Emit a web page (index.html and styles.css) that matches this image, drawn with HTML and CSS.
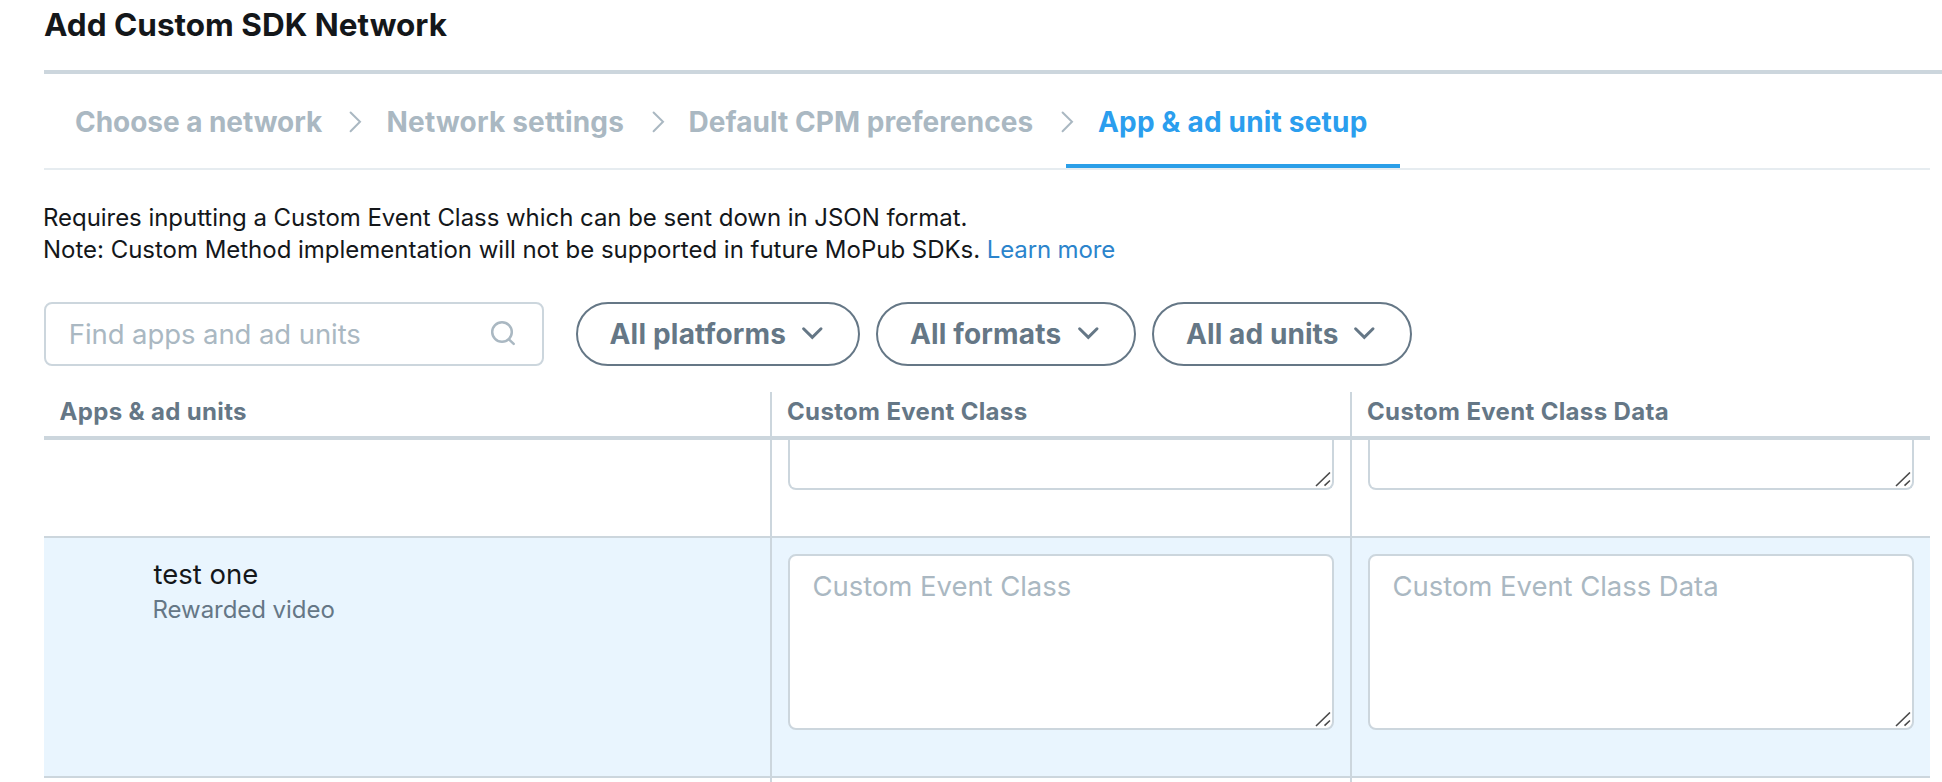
FILE: index.html
```
<!DOCTYPE html>
<html lang="en">
<head>
<meta charset="utf-8">
<title>Add Custom SDK Network</title>
<link rel="stylesheet" href="styles.css">
</head>
<body>
<header class="header"><h1 class="title">Add Custom SDK Network</h1></header>

<main class="main">
  <nav class="steps">
    <a class="step step-choose">Choose a network
      <svg class="sep" viewBox="0 0 14 22"><path d="M2.6 1.5 L12 10.8 L2.6 20.3"/></svg></a>
    <a class="step step-settings">Network settings
      <svg class="sep" viewBox="0 0 14 22"><path d="M2.6 1.5 L12 10.8 L2.6 20.3"/></svg></a>
    <a class="step step-cpm">Default CPM preferences
      <svg class="sep" viewBox="0 0 14 22"><path d="M2.6 1.5 L12 10.8 L2.6 20.3"/></svg></a>
    <a class="step step-setup active">App &amp; ad unit setup</a>
  </nav>

  <div class="intro">
    <p class="intro-line line-json">Requires inputting a Custom Event Class which can be sent down in JSON format.</p>
    <p class="intro-line line-note">Note: Custom Method implementation will not be supported in future MoPub SDKs. <a class="link">Learn more</a></p>
  </div>

  <div class="filters">
    <div class="search">
      <span class="placeholder search-text">Find apps and ad units</span>
      <svg class="search-icon" viewBox="0 0 28 28"><circle cx="13" cy="12" r="9.8"/><path d="M20.2 19.6 L24.7 23.8"/></svg>
    </div>
    <button class="pill pill-platforms"><span>All platforms</span>
      <svg class="caret" viewBox="0 0 24 16"><path d="M3.6 2.8 L12.3 11.4 L21 2.8"/></svg></button>
    <button class="pill pill-formats"><span>All formats</span>
      <svg class="caret" viewBox="0 0 24 16"><path d="M3.6 2.8 L12.3 11.4 L21 2.8"/></svg></button>
    <button class="pill pill-units"><span>All ad units</span>
      <svg class="caret" viewBox="0 0 24 16"><path d="M3.6 2.8 L12.3 11.4 L21 2.8"/></svg></button>
  </div>

  <section class="table">
    <div class="row row-head">
      <div class="cell head-name">Apps &amp; ad units</div>
      <div class="cell">Custom Event Class</div>
      <div class="cell">Custom Event Class Data</div>
    </div>
    <div class="row row-scrolled">
      <div class="cell"></div>
      <div class="cell"><div class="field field-cut"><svg class="grip" viewBox="0 0 16 16"><path d="M1 14 L15 0.5 M9.5 13.7 L15 8.5"/></svg></div></div>
      <div class="cell"><div class="field field-cut"><svg class="grip" viewBox="0 0 16 16"><path d="M1 14 L15 0.5 M9.5 13.7 L15 8.5"/></svg></div></div>
    </div>
    <div class="row row-unit">
      <div class="cell unit">
        <div class="unit-name">test one</div>
        <div class="unit-format">Rewarded video</div>
      </div>
      <div class="cell"><div class="field"><span class="placeholder">Custom Event Class</span><svg class="grip" viewBox="0 0 16 16"><path d="M1 14 L15 0.5 M9.5 13.7 L15 8.5"/></svg></div></div>
      <div class="cell"><div class="field"><span class="placeholder">Custom Event Class Data</span><svg class="grip" viewBox="0 0 16 16"><path d="M1 14 L15 0.5 M9.5 13.7 L15 8.5"/></svg></div></div>
    </div>
    <div class="row row-next">
      <div class="cell"></div>
      <div class="cell"></div>
      <div class="cell"></div>
    </div>
  </section>
</main>
</body>
</html>
```
FILE: styles.css
```
* { box-sizing: border-box; }

body {
  margin: 0;
  height: 782px;
  overflow: hidden;
  background: #fff;
  color: #14171a;
  font-family: Inter, "Liberation Sans", sans-serif;
  white-space: nowrap;
}

svg { display: block; fill: none; }

.header {
  height: 74px;
  margin-left: 44px;
  border-bottom: 4px solid #ccd6dd;
}
.title {
  margin: 0;
  font-size: 31.5px;
  line-height: 49px;
  font-weight: 700;
  letter-spacing: 0;
}

.main { margin: 0 12px 0 44px; }

.steps {
  display: flex;
  height: 96px;
  border-bottom: 2px solid #e6ecf0;
}
.step {
  position: relative;
  height: 94px;
  padding: 32px 0 0 32px;
  font-size: 28px;
  line-height: 32px;
  font-weight: 700;
  color: #aab8c2;
}
.step-choose { width: 310px; padding-left: 31px; letter-spacing: -0.05px; }
.step-settings { width: 302.5px; padding-left: 32.5px; letter-spacing: 0.2px; }
.step-cpm { width: 409.5px; letter-spacing: 0.05px; }
.step-setup { width: 334px; letter-spacing: 0.193px; }
.step.active { color: #2b9eee; border-bottom: 4px solid #2b9fe8; }
.sep {
  position: absolute;
  top: 37px;
  right: -8px;
  width: 14px;
  height: 22px;
  stroke: #aab8c2;
  stroke-width: 2;
  stroke-linecap: round;
}

.intro { padding-top: 32px; height: 132px; margin-left: -1px; }
.intro-line { margin: 0; font-size: 24px; line-height: 32px; }
.line-json { letter-spacing: -0.045px; }
.line-note { letter-spacing: -0.02px; }
.link { color: #2b84cc; letter-spacing: -0.15px; }

.filters { display: flex; height: 90px; }
.search {
  display: flex;
  align-items: center;
  justify-content: space-between;
  width: 500px;
  height: 64px;
  margin-right: 32px;
  padding: 0 25px 0 22.8px;
  border: 2px solid #ccd6dd;
  border-radius: 8px;
}
.placeholder { font-size: 27.5px; line-height: 32px; letter-spacing: -0.05px; color: #aab8c2; }
.search-text { letter-spacing: -0.084px; }
.search-icon { width: 28px; height: 28px; stroke: #aab8c2; stroke-width: 2.5; stroke-linecap: round; }

.pill {
  display: flex;
  align-items: center;
  justify-content: space-between;
  width: 260px;
  height: 64px;
  margin-right: 16px;
  padding: 0 34px 0 32px;
  border: 2px solid #657786;
  border-radius: 32px;
  background: #fff;
  color: #657786;
  font: 700 28px/32px Inter, "Liberation Sans", sans-serif;
  letter-spacing: 0.15px;
}
.pill-platforms { width: 284px; padding-left: 31.5px; letter-spacing: 0.2px; }
.pill-units { letter-spacing: 0.09px; }
.caret { width: 24px; height: 16px; stroke: #657786; stroke-width: 3; stroke-linecap: round; }

.row {
  display: grid;
  grid-template-columns: 726px 580px 580px;
  border-bottom: 2px solid #ccd6dd;
}
.cell { padding: 16px 16px 0; }
.cell + .cell { border-left: 2px solid #ccd6dd; }

.row-head {
  height: 48px;
  border-bottom-width: 4px;
  font-size: 24px;
  line-height: 39px;
  font-weight: 700;
  letter-spacing: 0.34px;
  color: #657786;
}
.row-head .cell { padding: 0 0 0 15px; }
.row-head .head-name { padding-left: 15.5px; }

.row-scrolled { height: 98px; }
.row-scrolled .cell { padding-top: 0; }
.row-unit { height: 240px; background: #e9f5fe; }
.row-next { height: 4px; border-bottom: 0; }
.row-next .cell { padding: 0; }

.unit.cell { padding: 18px 0 0 109.5px; }
.unit-name { font-size: 27.5px; line-height: 36px; }
.unit-format {
  margin-left: -1px;
  font-size: 24px;
  line-height: 35px;
  letter-spacing: -0.05px;
  color: #657786;
}

.field {
  position: relative;
  width: 546px;
  height: 176px;
  padding: 14px 22.5px;
  border: 2px solid #ccd6dd;
  border-radius: 8px;
  background: #fff;
}
.field .placeholder { display: block; }
.field-cut { height: 50px; border-top: 0; border-radius: 0 0 8px 8px; }
.grip {
  position: absolute;
  right: 1px;
  bottom: 0;
  width: 16px;
  height: 16px;
  stroke: #4a4a4a;
  stroke-width: 1.6;
}
```
